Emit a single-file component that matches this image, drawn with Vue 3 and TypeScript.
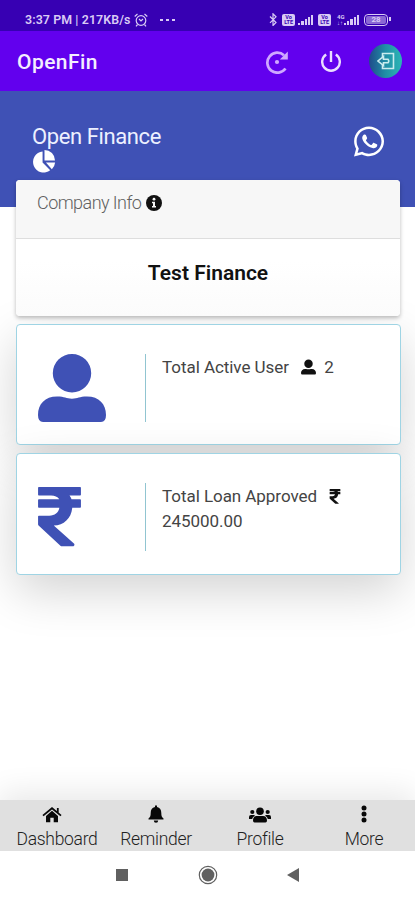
<script setup lang="ts">
interface Tab {
  label: string
  icon: string
}

interface Stat {
  label: string
  value: string
  icon: 'user' | 'rupee'
}

const stats: Stat[] = [
  { label: 'Total Active User', value: '2', icon: 'user' },
  { label: 'Total Loan Approved', value: '245000.00', icon: 'rupee' },
]

const tabs: Tab[] = [
  { label: 'Dashboard', icon: 'home' },
  { label: 'Reminder', icon: 'bell' },
  { label: 'Profile', icon: 'users' },
  { label: 'More', icon: 'more' },
]

const shapes: Record<Stat['icon'], { box: string; path: string }> = {
  user: {
    box: '0 0 68 68',
    path: 'M34 0a19.2 19.2 0 1 1 0 38.4a19.2 19.2 0 0 1 0-38.4zM19 42.5c8 0 9 2.2 15 2.2s7-2.2 15-2.2c12 0 19 7.5 19 18.500q0 7-5 7H5q-5 0-5-7c0-11 7-18.500 19-18.500z',
  },
  rupee: {
    box: '0 32 320 448',
    path: 'M314 96q6 0 6-6V38q0-6-6-6H6q-6 0-6 6v52q0 6 6 6h91.280c27.308 0 48.261 9.958 60.970 27.252H6q-6 0-6 6v52q0 6 6 6h152.757c-6.217 36.086-32.961 58.632-74.757 58.632H6q-6 0-6 6v59c0 3.349 1.400 6.546 3.861 8.818l165.052 152.356a12 12 0 0 0 8.139 3.182h82.562c10.924 0 16.166-13.408 8.139-20.818L116.871 319.906c76.499-2.340 131.144-53.395 138.318-132.654H314q6 0 6-6v-52q0-6-6-6h-64.690c-3.486-11.541-8.280-17.500-14.252-27.252z',
  },
}

const signalBars: number[] = [2, 4, 6, 8, 10]
</script>

<template>
  <div class="screen">
    <div class="status">
      <span class="clock">3:37 PM | 217KB/s</span>
      <svg class="alarm" viewBox="0 0 14 14" fill="none" stroke="currentColor" stroke-width="1.2">
        <circle cx="7" cy="7.5" r="4.8" /><path d="M.7 3.5 3.5 1M13.3 3.5 10.5 1M3.5 11.5 2 13.3M10.5 11.5 12 13.3M5 6l2 2 2-2" />
      </svg>
      <span class="dots"><i /><i /><i /></span>
      <span class="spacer" />
      <svg class="bt" viewBox="0 0 8 13" fill="none" stroke="currentColor" stroke-width="1.2"><path d="m1 3.5 6 6-3 3V.8l3 3-6 6" /></svg>
      <span class="volte"><b>Vo</b><b>LTE</b></span>
      <span class="signal"><i v-for="h in signalBars" :key="h" :style="{ height: h + 'px' }" /></span>
      <span class="volte second"><b>Vo</b><b>LTE</b></span>
      <span class="network"><b>4G</b><b>↓↑</b></span>
      <span class="signal"><i v-for="h in signalBars" :key="h" :style="{ height: h + 'px' }" /></span>
      <span class="battery"><b>28</b></span>
    </div>

    <header class="appbar">
      <h1>OpenFin</h1>
      <svg class="refresh" viewBox="0 0 24 24" fill="none" stroke="currentColor" stroke-width="2.7">
        <path d="M20.5 18.5A10 10 0 1 1 19 5.2" /><path d="M22.800 1.500v8h-8z" fill="currentColor" stroke="none" /><circle cx="12" cy="12" r="2.100" fill="currentColor" stroke="none" />
      </svg>
      <svg class="power" viewBox="0 0 20 22" fill="none" stroke="currentColor" stroke-width="2.4">
        <path d="M10 1v11M5.2 4.5a8.8 8.8 0 1 0 9.6 0" />
      </svg>
      <span class="exit">
        <svg viewBox="0 0 18 18" fill="none" stroke="currentColor" stroke-width="1.6">
          <path d="M5.5 5V1.5h11v15h-11V13" /><path d="M11 7.2H6.5V4.5L1 9l5.500 4.500v-2.700H11q1.500-1.800 0-3.600z" />
        </svg>
      </span>
    </header>

    <section class="banner">
      <div class="brand">
        <span class="brand-name">Open Finance</span>
        <svg class="pie" viewBox="0 0 24 24" fill="currentColor">
          <path d="M10.5 1.5V13l8 8A11 11 0 1 1 10.5 1.5z" /><path d="M12.5 0A11 11 0 0 1 23.5 11h-11z" /><path d="M14 13h9.6a11 11 0 0 1-3.4 7z" />
        </svg>
      </div>
      <svg class="whatsapp" viewBox="0 32 448 448" fill="currentColor">
        <path d="M380.9 97.1C339 55.1 283.2 32 223.9 32c-122.4 0-222 99.6-222 222 0 39.1 10.2 77.3 29.6 111L0 480l117.7-30.9c32.4 17.7 68.9 27 106.1 27h.1c122.3 0 224.1-99.6 224.1-222 0-59.3-25.2-115-67.1-157zm-157 341.6c-33.2 0-65.7-8.9-94-25.7l-6.7-4-69.8 18.3L72 359.2l-4.4-7c-18.5-29.4-28.2-63.3-28.2-98.2 0-101.7 82.8-184.5 184.6-184.5 49.3 0 95.6 19.2 130.4 54.1 34.8 34.9 56.2 81.2 56.1 130.5 0 101.8-84.9 184.6-186.6 184.6z" />
        <path d="M145 156c8-8 27-9 32 2l18 43c4 11-3 21-14 32-5 5-2 10 2 16 19 29 39 45 68 58 6 3 10 2 14-3l18-23c5-6 10-7 17-4l41 21c8 4 7 8 6 17-4 27-34 42-59 40-31-3-65-17-91-39-31-26-66-65-73-102-5-25 6-44 21-58z" />
      </svg>
    </section>

    <main class="content">
      <article class="company">
        <div class="company-head">
          <span>Company Info</span>
          <svg viewBox="0 0 16 16"><circle cx="8" cy="8" r="8" fill="#111" /><path d="M6 6.7h3v4.2h1v1.6H6v-1.6h1V8.3H6z" fill="#f7f7f7" /><circle cx="8" cy="4.2" r="1.4" fill="#f7f7f7" /></svg>
        </div>
        <div class="company-name">Test Finance</div>
      </article>

      <article v-for="s in stats" :key="s.label" class="stat">
        <div class="figure">
          <svg :class="s.icon" :viewBox="shapes[s.icon].box"><path :d="shapes[s.icon].path" /></svg>
        </div>
        <p :class="['detail', s.icon + '-detail']">
          {{ s.label }}
          <svg :class="['mini', 'mini-' + s.icon]" :viewBox="shapes[s.icon].box"><path :d="shapes[s.icon].path" /></svg>
          {{ s.value }}
        </p>
      </article>
    </main>

    <nav class="tabs">
      <a v-for="t in tabs" :key="t.label" :class="['tab', t.icon]">
        <svg v-if="t.icon === 'home'" viewBox="0 0 20 16" width="20" height="16"><path d="M10 3.8 16 9v6.2h-4.3v-4.4H8.3v4.4H4V9z" /><path d="m1 8.6 9-7.4 9 7.4M15.8 1v5" fill="none" stroke="currentColor" stroke-width="1.8" /></svg>
        <svg v-else-if="t.icon === 'bell'" viewBox="0 0 16 18" width="16" height="18"><path d="M7 .5h2v1.6c3 .6 4.3 2.8 4.3 5.8 0 3 .6 4.2 2.2 5.7v1H.5v-1c1.6-1.5 2.2-2.7 2.2-5.7 0-3 1.3-5.2 4.3-5.8zM5.800 15.500h4.400a2.200 2.200 0 0 1-4.400 0z" /></svg>
        <svg v-else-if="t.icon === 'users'" viewBox="0 0 22 16" width="22" height="16"><circle cx="11" cy="4.200" r="3.800" /><circle cx="3.300" cy="5" r="2.100" /><circle cx="18.700" cy="5" r="2.100" /><path d="M8 9h6c2.500 0 4 2 4 4.500q0 2-1.500 2h-11q-1.500 0-1.500-2C4 11 5.500 9 8 9zM2 8h3l1 .8c-1.500.8-2.500 1.700-2.800 3.200H0v-2q0-2 2-2zM20 8h-3l-1 .8c1.500.8 2.500 1.700 2.800 3.200H22v-2q0-2-2-2z" /></svg>
        <svg v-else viewBox="0 0 6 18" width="6" height="18"><circle cx="3" cy="3" r="2.500" /><circle cx="3" cy="9" r="2.500" /><circle cx="3" cy="15" r="2.500" /></svg>
        <span>{{ t.label }}</span>
      </a>
    </nav>

    <footer class="system">
      <svg viewBox="0 0 184 20" width="184" height="20" fill="#606060">
        <path d="M0 4h12v12H0z" /><circle cx="92" cy="10" r="6.400" /><circle cx="92" cy="10" r="8.700" fill="none" stroke="#606060" stroke-width="1.200" /><path d="M171 10 183 3v14z" />
      </svg>
    </footer>
  </div>
</template>

<style>
body {
  background: #fff;
  overflow: hidden;
}
</style>

<style scoped>
* {
  box-sizing: border-box;
}
.screen {
  height: 900px;
  display: flex;
  flex-direction: column;
  overflow: hidden;
  background: #fff;
  font-family: Roboto, "Noto Sans", sans-serif;
  color: #212529;
}
svg {
  flex: none;
  display: block;
}
.status {
  height: 31px;
  flex: none;
  display: flex;
  align-items: center;
  padding: 8px 24px 0 25px;
  background: #3700b3;
  color: #d9cbf5;
}
.clock {
  width: 107px;
  font-size: 12.4px;
  font-weight: 600;
  letter-spacing: 0.1px;
  white-space: nowrap;
}
.alarm {
  width: 14px;
  height: 14px;
  margin-left: 2px;
}
.dots {
  display: flex;
  gap: 3px;
  margin-left: 12px;
}
.dots i {
  width: 3px;
  height: 2px;
  background: currentColor;
}
.spacer {
  flex: 1;
}
.bt {
  width: 8px;
  height: 13px;
}
.volte {
  width: 13px;
  height: 12px;
  margin: 0 3px 0 5px;
  border-radius: 2px;
  background: currentColor;
  display: flex;
  flex-direction: column;
  align-items: center;
  justify-content: center;
}
.volte b {
  color: #3700b3;
  font-size: 5.5px;
  line-height: 5px;
}
.signal {
  display: flex;
  align-items: flex-end;
  gap: 1px;
  height: 11px;
}
.signal i {
  width: 2.2px;
  background: currentColor;
}
.network {
  display: flex;
  flex-direction: column;
  width: 7px;
  margin-left: 3px;
  font-size: 6px;
  line-height: 6px;
}
.battery {
  position: relative;
  width: 24px;
  height: 12px;
  margin: 0 3px 0 5px;
  padding: 1px;
  border: 1.5px solid currentColor;
  border-radius: 4px;
  display: flex;
}
.battery b {
  flex: 1;
  border-radius: 2px;
  background: #8a68d4;
  font-size: 8px;
  line-height: 8px;
  text-align: center;
}
.battery::after {
  content: "";
  position: absolute;
  right: -4px;
  top: 2.5px;
  width: 2px;
  height: 4px;
  background: currentColor;
}
.appbar {
  height: 60px;
  flex: none;
  display: flex;
  align-items: center;
  padding: 2px 12px 0 17px;
  background: #6200ee;
  color: #eadcff;
}
.appbar h1 {
  flex: 1;
  margin: 0;
  font-size: 21px;
  font-weight: 500;
  letter-spacing: 0.45px;
  color: #f4edff;
}
.refresh {
  width: 24px;
  height: 24px;
  color: #cfa8ff;
}
.power {
  width: 20px;
  height: 22px;
  margin: 0 28px 0 32px;
  transform: translateY(-1px);
}
.exit {
  width: 33px;
  height: 34px;
  margin-top: -2px;
  border-radius: 50%;
  display: flex;
  align-items: center;
  justify-content: center;
  background: linear-gradient(90deg, #204b8b, #208fa6 50%, #2bb6b5);
}
.appbar > svg {
  position: relative;
  left: -1.5px;
}
.exit {
  position: relative;
  left: -1px;
}
.exit svg {
  width: 18px;
  height: 18px;
  color: #c9ecee;
}
.banner {
  height: 116px;
  flex: none;
  display: flex;
  justify-content: space-between;
  padding: 32px 31px 0 32px;
  background: #3f51b5;
  color: #fff;
}
.brand-name {
  display: block;
  height: 27px;
  font-size: 22px;
  line-height: 27px;
  letter-spacing: -0.4px;
  color: #edf0ff;
}
.pie {
  width: 24px;
  height: 23px;
}
.whatsapp {
  width: 30px;
  height: 31px;
  margin-top: 3px;
}
.content {
  position: relative;
  flex: 1;
  margin-top: -27px;
  padding: 0 14.5px 0 15.5px;
}
.company {
  position: relative;
  z-index: 1;
  height: 136px;
  margin: 0 0.5px 8px;
  border-radius: 4px;
  background: linear-gradient(#fff 60%, #fbfbfb);
  box-shadow: 0 2px 4px rgba(0, 0, 0, 0.27);
}
.company-head {
  height: 59px;
  display: flex;
  align-items: flex-start;
  gap: 5px;
  padding: 11px 21px;
  border-radius: 4px 4px 0 0;
  border-bottom: 1px solid #dedede;
  background: #f7f7f7;
  color: #606060;
  font-size: 18px;
  font-weight: 300;
  line-height: 24px;
  letter-spacing: -0.55px;
}
.company-head svg {
  width: 16px;
  height: 16px;
  margin-top: 4px;
}
.company-name {
  padding-top: 19px;
  text-align: center;
  font-size: 21px;
  font-weight: 600;
  line-height: 30px;
  color: #111;
}
.stat {
  height: 121px;
  margin-bottom: 8px;
  padding: 29px 16px 0 21.5px;
  display: flex;
  border: 1.5px solid #9fd4e4;
  border-radius: 4px;
  background: #fff;
  box-shadow: 0 16px 48px rgba(0, 0, 0, 0.175);
}
.stat:last-child {
  height: 122px;
}
.figure {
  width: 108px;
  height: 68px;
  border-right: 1.5px solid #91c5d1;
  fill: #3f51b5;
}
.figure .user {
  width: 68px;
  height: 68px;
}
.figure .rupee {
  width: 43px;
  height: 60px;
  margin-top: 4px;
}
.detail {
  margin: 1px 0 0 16px;
  font-size: 17px;
  line-height: 25px;
  letter-spacing: -0.05px;
  color: #444;
}
.rupee-detail {
  width: 200px;
}
.mini {
  display: inline-block;
  margin: 0 4px 0 8px;
  fill: #111;
  vertical-align: -2px;
}
.mini-user {
  width: 15px;
  height: 16px;
}
.mini-rupee {
  width: 12px;
  height: 15px;
  margin-right: 15px;
}
.tabs {
  position: relative;
  height: 51px;
  flex: none;
  display: grid;
  grid-template-columns: 112px 88px 120px 88px;
  background: #e0e0e0;
  box-shadow: 0 -8px 30px rgba(0, 0, 0, 0.09);
}
.tab {
  display: flex;
  flex-direction: column;
  align-items: center;
  justify-content: flex-end;
  gap: 3px;
  padding-bottom: 1px;
  fill: #080808;
  color: #080808;
}
.tab svg {
  transform: translateY(-2px);
}
.home svg {
  margin-right: 8px;
}
.tab span {
  font-size: 17.5px;
  font-weight: 300;
  line-height: 22px;
  letter-spacing: -0.3px;
  color: #222;
}
.home span {
  margin-left: 2px;
}
.system {
  position: relative;
  height: 49px;
  flex: none;
  display: flex;
  justify-content: center;
  padding: 14px 0 0 1px;
  background: #fff;
}
</style>
